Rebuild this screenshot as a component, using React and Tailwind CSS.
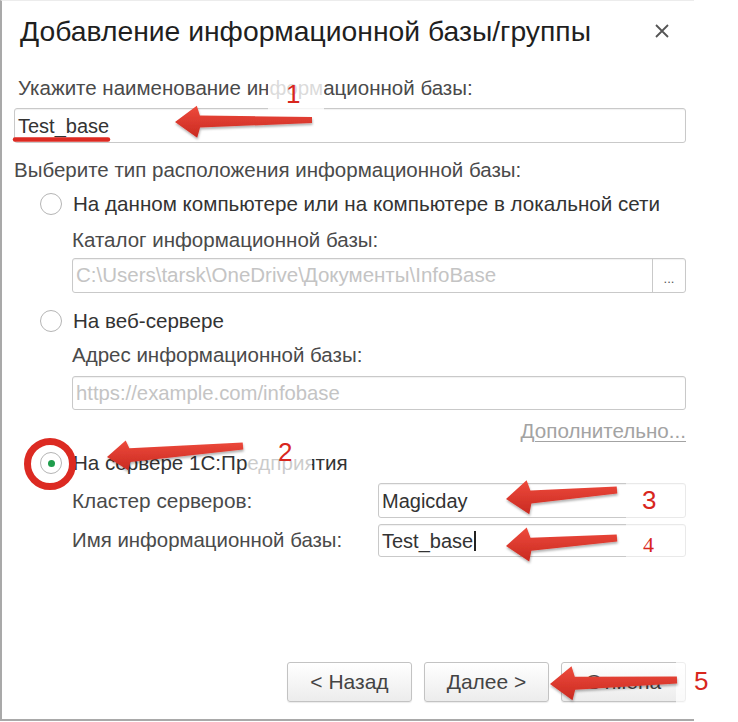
import React from "react"

function Radio({ checked = false }) {
  return (
    <span className="flex h-[22px] w-[22px] shrink-0 items-center justify-center rounded-full border-[1.5px] border-[#b5b5b5] bg-white">
      {checked && <span className="h-[7px] w-[7px] rounded-full bg-[#1f9d4c]" />}
    </span>
  )
}

function Field({ value, placeholder, className = "", withButton = false, cursor = false }) {
  return (
    <div className={`flex rounded-[3px] border border-[#c9c9c9] bg-white shadow-[inset_0_1px_1px_rgba(0,0,0,0.06)] ${className}`}>
      <div className="flex flex-1 items-center overflow-hidden whitespace-nowrap px-[3px]">
        {value ? (
          <span className="text-[#333]">
            {value}
            {cursor && <span className="ml-[1px] inline-block h-[20px] w-[1.5px] translate-y-[3px] bg-[#222]" />}
          </span>
        ) : (
          <span className="text-[#c4c4c4]">{placeholder}</span>
        )}
      </div>
      {withButton && (
        <div className="flex w-[33px] items-center justify-center border-l border-[#c9c9c9] pt-[6px] text-[13px] text-[#555]">
          ...
        </div>
      )}
    </div>
  )
}

function Button({ children }) {
  return (
    <div className="flex h-[40px] w-[125px] items-center justify-center rounded-[3px] border border-[#c3c3c3] bg-gradient-to-b from-white to-[#ececec] text-[21px] text-[#444] shadow-[0_1px_1px_rgba(0,0,0,0.08)]">
      {children}
    </div>
  )
}

// arrow polygon from tip (tx,ty) back to tail (ex,ey), barbs swept slightly back
function arrowPoints(tx, ty, ex, ey, headLen = 22, headW = 16, neck = 6, tail = 3) {
  const len = Math.hypot(ex - tx, ey - ty)
  const ux = (ex - tx) / len
  const uy = (ey - ty) / len
  const nx = -uy
  const ny = ux
  const p = (a, b) => `${(tx + ux * a + nx * b).toFixed(1)},${(ty + uy * a + ny * b).toFixed(1)}`
  const q = (b) => `${(ex + nx * b).toFixed(1)},${(ey + ny * b).toFixed(1)}`
  const n = headLen + 3
  return [p(0, 0), p(headLen, headW), p(n, neck), q(tail), q(-tail), p(n, -neck), p(headLen, -headW)].join(" ")
}

const arrows = [
  [175, 122, 312, 120, 22, 16, 6, 3],
  [107, 457, 243, 446, 20, 15, 7, 3.5],
  [506, 499, 617, 490, 22, 17, 6.5, 3.5],
  [506, 546, 617, 538, 22, 17, 6.5, 3.5],
  [550, 684, 677, 680, 22, 17, 6.5, 3.5],
]

export default function App() {
  return (
    <div className="min-h-[722px] w-[738px] bg-white font-['Liberation_Sans',Arial,sans-serif]">
      <div className="relative flex h-[721px] w-[694px] flex-col border-b-2 border-l-2 border-t border-b-[#a9a9a9] border-l-[#a9a9a9] border-t-[#ececec] pl-[12px] pr-[8px] pt-[13px]">
        {/* header */}
        <div className="flex h-[34px] items-center justify-between pl-[6px] pr-[10px]">
          <h1 className="whitespace-nowrap text-[28.3px] leading-[34px] text-[#1f1f1f]">Добавление информационной базы/группы</h1>
          <svg width="16" height="16" viewBox="0 0 16 16" className="mr-[6px] shrink-0">
            <path d="M2 2 L14 14 M14 2 L2 14" stroke="#555" strokeWidth="1.8" />
          </svg>
        </div>

        <div className="mt-[29px] h-[22px] pl-[4px] text-[20.5px] leading-[22px] text-[#4a4a4a]">
          Укажите наименование информационной базы:
        </div>
        <Field value="Test_base" className="mt-[9px] h-[35px] text-[20px]" />

        <div className="mt-[16px] h-[22px] text-[20.5px] leading-[22px] text-[#4a4a4a]">
          Выберите тип расположения информационной базы:
        </div>

        <div className="mt-[11px] flex h-[24px] items-center gap-[11px] pl-[26px] text-[20.6px] text-[#333]">
          <Radio />
          <span className="whitespace-nowrap">На данном компьютере или на компьютере в локальной сети</span>
        </div>
        <div className="mt-[13px] h-[22px] pl-[58px] text-[20.5px] leading-[22px] text-[#4a4a4a]">Каталог информационной базы:</div>
        <div className="mt-[7px] pl-[58px]">
          <Field placeholder="C:\Users\tarsk\OneDrive\Документы\InfoBase" withButton className="h-[35px] text-[20.5px]" />
        </div>

        <div className="mt-[16px] flex h-[24px] items-center gap-[11px] pl-[26px] text-[20.6px] text-[#333]">
          <Radio />
          <span>На веб-сервере</span>
        </div>
        <div className="mt-[11px] h-[22px] pl-[58px] text-[20.5px] leading-[22px] text-[#4a4a4a]">Адрес информационной базы:</div>
        <div className="mt-[10px] pl-[58px]">
          <Field placeholder="https://example.com/infobase" className="h-[34px] text-[20.3px]" />
        </div>
        <div className="mt-[10px] flex h-[22px] justify-end text-[20.6px] leading-[22px] text-[#a3a3a3]">
          <span className="underline decoration-1 underline-offset-[3px]">Дополнительно...</span>
        </div>

        <div className="mt-[9px] flex h-[24px] items-center gap-[11px] pl-[26px] text-[20.6px] text-[#333]">
          <Radio checked />
          <span>На сервере 1С:Предприятия</span>
        </div>

        <div className="mt-[8px] flex items-center pl-[58px]">
          <span className="w-[306px] text-[20.8px] text-[#4a4a4a]">Кластер серверов:</span>
          <Field value="Magicday" className="h-[35px] flex-1 text-[20px]" />
        </div>
        <div className="mt-[6px] flex items-center pl-[58px]">
          <span className="w-[306px] text-[20.4px] text-[#4a4a4a]">Имя информационной базы:</span>
          <Field value="Test_base" cursor className="h-[33px] flex-1 text-[20px]" />
        </div>

        <div className="mt-auto mb-[17px] flex justify-end gap-[12px]">
          <Button>&lt; Назад</Button>
          <Button>Далее &gt;</Button>
          <Button>Отмена</Button>
        </div>

        {/* annotations laid over the dialog */}
        <div className="pointer-events-none absolute left-[266px] top-[79px] h-[32px] w-[56px] bg-white/80" />
        <div className="pointer-events-none absolute left-[246px] top-[451px] h-[23px] w-[64px] bg-white/75" />
        <div className="pointer-events-none absolute left-[624px] top-[480px] h-[82px] w-[70px] bg-white/60" />
        <div className="pointer-events-none absolute left-[674px] top-[658px] h-[48px] w-[20px] bg-white/70" />

        <span className="pointer-events-none absolute left-[284px] top-[78px] text-[26px] leading-[30px] text-[#d8261d]">1</span>
        <span className="pointer-events-none absolute left-[276px] top-[436px] text-[26px] leading-[30px] text-[#d8261d]">2</span>
        <span className="pointer-events-none absolute left-[640px] top-[484px] text-[26px] leading-[30px] text-[#d8261d]">3</span>
        <span className="pointer-events-none absolute left-[641px] top-[531px] font-['Liberation_Serif',serif] text-[22px] leading-[26px] text-[#d8261d]">4</span>
        <span className="pointer-events-none absolute left-[692px] top-[665px] text-[26px] leading-[30px] text-[#d8261d]">5</span>

        <svg className="pointer-events-none absolute left-[-2px] top-[-1px]" width="738" height="722" viewBox="0 0 738 722">
          <defs>
            <linearGradient id="red" x1="0" y1="0" x2="0" y2="1">
              <stop offset="0" stopColor="#ee4a3c" />
              <stop offset="1" stopColor="#c92a21" />
            </linearGradient>
            <filter id="shadow" x="-10%" y="-30%" width="120%" height="180%">
              <feDropShadow dx="0.5" dy="2" stdDeviation="1.2" floodColor="#000" floodOpacity="0.3" />
            </filter>
          </defs>
          <line x1="15" y1="139.5" x2="108" y2="139.5" stroke="#dd2a22" strokeWidth="4.5" strokeLinecap="round" />
          <circle cx="50" cy="464" r="22.5" fill="none" stroke="#dc2a22" strokeWidth="7" />
          {arrows.map((a, i) => (
            <polygon key={i} points={arrowPoints(...a)} fill="url(#red)" filter="url(#shadow)" />
          ))}
        </svg>
      </div>
    </div>
  )
}
